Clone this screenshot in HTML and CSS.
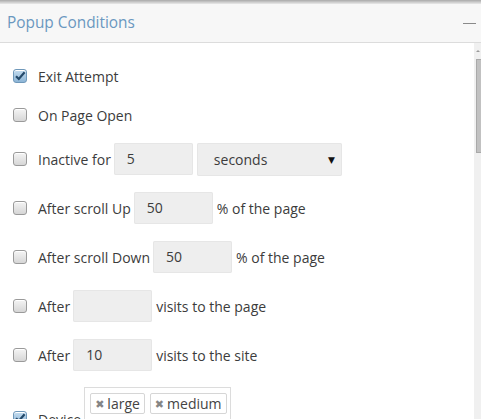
FILE: index.html
```html
<!DOCTYPE html>
<html>
<head>
<meta charset="utf-8">
<link rel="stylesheet" href="styles.css">
</head>
<body>
<div class="topbar"></div>
<div class="header">
  <span class="title">Popup Conditions</span>
  <span class="minus"></span>
</div>
<div class="main">
  <div class="content">
    <div class="row simple"><span class="cb checked"><svg viewBox="0 0 14 14" width="14" height="14"><path d="M3 7.2 L5.8 10 L11.6 3.2" fill="none" stroke="#244a6b" stroke-width="2.2"/></svg></span><span class="label">Exit Attempt</span></div>
    <div class="row simple"><span class="cb"></span><span class="label">On Page Open</span></div>
    <div class="row"><span class="cb"></span><span class="label">Inactive for</span><span class="inp">5</span><span class="sel"><span>seconds</span><span class="arrow">▼</span></span></div>
    <div class="row"><span class="cb"></span><span class="label">After scroll Up</span><span class="inp">50</span><span class="after">% of the page</span></div>
    <div class="row"><span class="cb"></span><span class="label">After scroll Down</span><span class="inp">50</span><span class="after">% of the page</span></div>
    <div class="row"><span class="cb"></span><span class="label">After</span><span class="inp"></span><span class="after">visits to the page</span></div>
    <div class="row"><span class="cb"></span><span class="label">After</span><span class="inp">10</span><span class="after">visits to the site</span></div>
    <div class="row device"><span class="cb checked"><svg viewBox="0 0 14 14" width="14" height="14"><path d="M3 7.2 L5.8 10 L11.6 3.2" fill="none" stroke="#244a6b" stroke-width="2.2"/></svg></span><span class="label">Device</span>
      <div class="tags"><span class="tag"><span class="x">✖</span>large</span><span class="tag"><span class="x">✖</span>medium</span></div>
    </div>
  </div>
  <div class="scrollbar"><span class="up"></span><span class="thumb"></span></div>
</div>
</body>
</html>
```
FILE: styles.css
```css
html, body {
  margin: 0;
  padding: 0;
  background: #fff;
  overflow: hidden;
  height: 419px;
}
body {
  font-family: "Open Sans", "DejaVu Sans", sans-serif;
  color: #3c3c3c;
}
.topbar {
  height: 4px;
  background: linear-gradient(#a9a9a9, #e9e9e9);
}
.header {
  height: 38px;
  background: #f7f7f7;
  border-bottom: 1px solid #dcdcdc;
  display: flex;
  align-items: center;
  justify-content: space-between;
  padding: 0 5px 0 7px;
}
.title {
  font-size: 15.4px;
  color: #6a98c0;
  margin-top: -2px;
}
.minus {
  width: 13px;
  height: 1px;
  background: #8a8a8a;
  margin-top: 1px;
}
.main {
  display: flex;
  height: 376px;
  overflow: hidden;
}
.content {
  flex: 1;
  padding: 22px 0 0 13px;
  display: flex;
  flex-direction: column;
  gap: 17px;
}
.row {
  display: flex;
  align-items: center;
  font-size: 14px;
  height: 32px;
  flex-shrink: 0;
  white-space: nowrap;
}
.row.simple {
  height: 22px;
}
.cb {
  width: 12px;
  height: 12px;
  border: 1px solid #9a9a9a;
  border-radius: 3px;
  background: linear-gradient(#f4f4f4, #d6d6d6);
  box-shadow: inset 0 1px 0 #fff;
  flex: none;
  position: relative;
}
.cb.checked {
  background: linear-gradient(#c4dcef, #8db5d6);
  border-color: #6f98ba;
}
.cb svg {
  position: absolute;
  left: -1px;
  top: -1px;
}
.label {
  margin-left: 11px;
  margin-right: 3px;
}
.inp {
  width: 66px;
  height: 32px;
  line-height: 32px;
  padding-left: 13px;
  background: #eeeeee;
  border-radius: 2px;
  box-shadow: inset 0 0 0 1px #e6e6e6;
}
.sel {
  width: 128px;
  height: 33px;
  margin-left: 4px;
  padding: 0 0 0 17px;
  background: #eeeeee;
  border-radius: 2px;
  box-shadow: inset 0 0 0 1px #e6e6e6;
  display: flex;
  align-items: center;
  justify-content: space-between;
}
.arrow {
  font-size: 9px;
  color: #111;
  margin-right: 7px;
}
.after {
  margin-left: 4px;
}
.row.device {
  height: 40px;
  align-items: flex-start;
}
.row.device .cb {
  margin-top: 23px;
}
.row.device .label {
  margin-top: 22px;
}
.tags {
  margin-top: -1px;
  border: 1px solid #dcdcdc;
  padding: 5px 3px 5px 5px;
  display: flex;
  gap: 5px;
}
.tag {
  border: 1px solid #d6d6d6;
  border-radius: 2px;
  height: 19px;
  line-height: 19px;
  padding: 0 4px 0 4px;
  font-size: 14px;
  color: #444;
}
.tag .x {
  color: #858585;
  font-size: 11px;
  margin-right: 3px;
  vertical-align: 1px;
}
.scrollbar {
  width: 7px;
  background: #f0f0f0;
  position: relative;
  flex: none;
}
.up {
  position: absolute;
  left: 2px;
  top: 7px;
  width: 0;
  height: 0;
  border-left: 2px solid transparent;
  border-right: 2px solid transparent;
  border-bottom: 2px solid #999;
}
.thumb {
  position: absolute;
  left: 2px;
  right: 0;
  top: 16px;
  height: 92px;
  background: #c1c1c1;
  border: 1px solid #a9a9a9;
  border-right: none;
}
```
